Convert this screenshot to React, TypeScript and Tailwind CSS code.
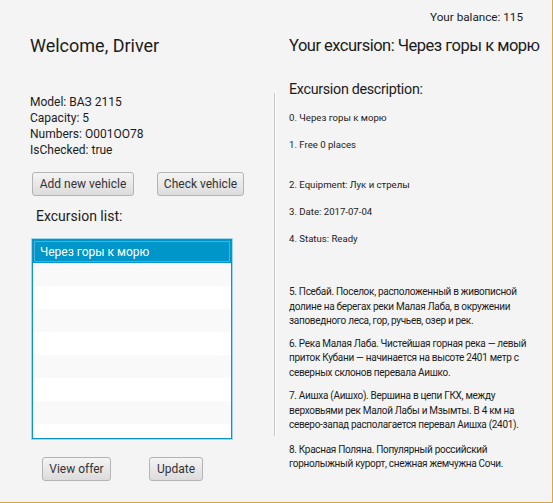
import type { ReactNode } from 'react';

const font = { fontFamily: 'Roboto, "Open Sans", sans-serif' };

function FxButton({ children, className }: { children: ReactNode; className?: string }) {
  return (
    <button
      className={`flex h-[24px] items-center justify-center rounded-[3px] border border-[#b4b4b4] bg-linear-to-b from-[#f4f4f4] to-[#dcdcdc] text-[12px] leading-none text-[#333] ${className ?? ''}`}
    >
      {children}
    </button>
  );
}

const smallItems = [
  { text: '0. Через горы к морю', mt: 'mt-[12px]' },
  { text: '1. Free 0 places', mt: 'mt-[13px]' },
  { text: '2. Equipment: Лук и стрелы', mt: 'mt-[26px]' },
  { text: '3. Date: 2017-07-04', mt: 'mt-[13px]' },
  { text: '4. Status: Ready', mt: 'mt-[13px]' },
];

const longItems = [
  {
    lines: ['5. Псебай. Поселок, расположенный в живописной', 'долине на берегах реки Малая Лаба, в окружении', 'заповедного леса, гор, ручьев, озер и рек.'],
    mt: 'mt-[39px]',
  },
  {
    lines: ['6. Река Малая Лаба. Чистейшая горная река — левый', 'приток Кубани — начинается на высоте 2401 метр с', 'северных склонов перевала Аишко.'],
    mt: 'mt-[8px]',
  },
  {
    lines: ['7. Аишха (Аишхо). Вершина в цепи ГКХ, между', 'верховьями рек Малой Лабы и Мзымты. В 4 км на', 'северо-запад располагается перевал Аишха (2401).'],
    mt: 'mt-[9px]',
  },
  {
    lines: ['8. Красная Поляна. Популярный российский', 'горнолыжный курорт, снежная жемчужна Сочи.'],
    mt: 'mt-[10px]',
  },
];

export default function App() {
  const rows = Array.from({ length: 8 });
  return (
    <div style={font} className="h-[503px] w-[553px] overflow-hidden border-r border-b border-[#e3a33f] bg-[#f4f4f4] text-[#1b1b1b]">
      <div className="flex h-[34px] justify-end pt-[9px] pr-[29px] text-[11.7px] leading-[16px]">Your balance: 115</div>

      <div className="flex">
        <div className="w-[274px] shrink-0 pl-[30px]">
          <h1 className="text-[18px] leading-[24px]">Welcome, Driver</h1>

          <div className="mt-[36px] text-[12px] leading-[16px]">
            <p>Model: ВАЗ 2115</p>
            <p>Capacity: 5</p>
            <p>Numbers: O001OO78</p>
            <p>IsChecked: true</p>
          </div>

          <div className="mt-[14px] flex gap-[23px] pl-[2px]">
            <FxButton className="w-[102px]">Add new vehicle</FxButton>
            <FxButton className="w-[87px]">Check vehicle</FxButton>
          </div>

          <p className="mt-[11px] pl-[6px] text-[14px] leading-[18px]">Excursion list:</p>

          <div className="mt-[14px] ml-[2px] h-[200px] w-[200px] overflow-hidden border border-[#0a95c8] bg-white shadow-[0_0_0_1px_#9fd6ec]">
            <div className="flex h-[23px] items-center bg-[#0096c9] pl-[7px] text-[12px] text-white shadow-[inset_0_0_0_1px_#0096c9,inset_0_0_0_2px_#43b2dc]">
              Через горы к морю
            </div>
            {rows.map((_, i) => (
              <div key={i} className={`h-[23px] ${i % 2 === 0 ? 'bg-[#f9f9f9]' : 'bg-white'}`} />
            ))}
          </div>

          <div className="mt-[18px] flex gap-[38px] pl-[12px]">
            <FxButton className="w-[69px]">View offer</FxButton>
            <FxButton className="w-[54px]">Update</FxButton>
          </div>
        </div>

        <div className="mt-[59px] h-[343px] w-[2px] shrink-0 border-l border-[#c8c8c8] bg-white" />

        <div className="pl-[13px]">
          <h2 className="whitespace-nowrap text-[16.5px] leading-[24px] tracking-[-0.5px]">Your excursion: Через горы к морю</h2>
          <p className="mt-[21px] text-[14.3px] leading-[20px] tracking-[-0.3px]">Excursion description:</p>

          {smallItems.map((it) => (
            <p key={it.text} className={`${it.mt} text-[9.6px] leading-[14px]`}>
              {it.text}
            </p>
          ))}

          {longItems.map((it) => (
            <div key={it.lines[0]} className={`${it.mt} text-[10px] leading-[14.5px] tracking-[-0.3px]`}>
              {it.lines.map((l) => (
                <p key={l} className="whitespace-nowrap">
                  {l}
                </p>
              ))}
            </div>
          ))}
        </div>
      </div>
    </div>
  );
}
